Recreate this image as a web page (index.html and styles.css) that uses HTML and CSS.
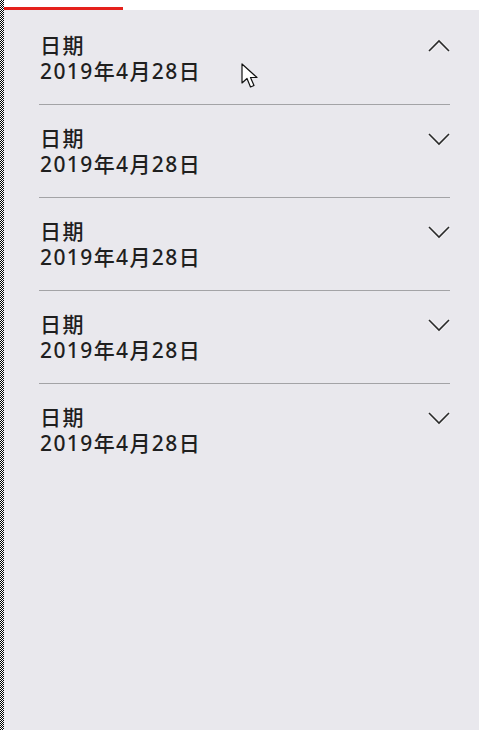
FILE: index.html
```html
<!DOCTYPE html>
<html lang="zh">
<head>
<meta charset="utf-8">
<link rel="stylesheet" href="styles.css">
</head>
<body>
<div class="frame">
  <div class="checker"></div>
  <div class="main">
    <div class="topbar"><div class="progress"></div></div>
    <div class="list">
      <div class="item">
        <div class="texts"><div class="label">日期</div><div class="value">2019年4月28日</div></div>
        <svg class="chev" width="24" height="14" viewBox="0 0 24 14"><polyline points="2,12 12,2 22,12" /></svg>
      </div>
      <div class="item">
        <div class="texts"><div class="label">日期</div><div class="value">2019年4月28日</div></div>
        <svg class="chev" width="24" height="14" viewBox="0 0 24 14"><polyline points="2,2 12,12 22,2" /></svg>
      </div>
      <div class="item">
        <div class="texts"><div class="label">日期</div><div class="value">2019年4月28日</div></div>
        <svg class="chev" width="24" height="14" viewBox="0 0 24 14"><polyline points="2,2 12,12 22,2" /></svg>
      </div>
      <div class="item">
        <div class="texts"><div class="label">日期</div><div class="value">2019年4月28日</div></div>
        <svg class="chev" width="24" height="14" viewBox="0 0 24 14"><polyline points="2,2 12,12 22,2" /></svg>
      </div>
      <div class="item last">
        <div class="texts"><div class="label">日期</div><div class="value">2019年4月28日</div></div>
        <svg class="chev" width="24" height="14" viewBox="0 0 24 14"><polyline points="2,2 12,12 22,2" /></svg>
      </div>
    </div>
  </div>
  <svg class="cursor" width="20" height="28" viewBox="0 0 20 28"><path d="M1,1 L1,20 L6,15.5 L9.5,24 L13,22.5 L9.5,14.5 L16,14.5 Z" fill="#fff" stroke="#111" stroke-width="1.2" stroke-linejoin="round"/></svg>
</div>
</body>
</html>
```
FILE: styles.css
```css
html, body {
  margin: 0;
  padding: 0;
  background: #fff;
}
.frame {
  position: relative;
  display: flex;
  width: 479px;
  height: 730px;
  overflow: hidden;
}
.checker {
  width: 4px;
  flex: none;
  background: repeating-conic-gradient(#000 0 25%, #fff 0 50%) 0 0 / 2px 2px;
}
.main {
  flex: 1;
  display: flex;
  flex-direction: column;
  background: #e9e8ed;
}
.topbar {
  height: 10px;
  background: #fff;
  display: flex;
  align-items: flex-end;
}
.progress {
  width: 119px;
  height: 3px;
  background: #e5211c;
}
.list {
  display: flex;
  flex-direction: column;
  padding: 2px 29px 0 35px;
}
.item {
  height: 92px;
  border-bottom: 1px solid #a3a3a6;
  display: flex;
  justify-content: space-between;
  align-items: flex-start;
  padding: 0 1px;
}
.item.last {
  border-bottom: none;
}
.texts {
  padding-top: 20px;
  font-family: "Noto Sans", "Noto Sans CJK SC", sans-serif;
  font-size: 21px;
  line-height: 26px;
  letter-spacing: 1.4px;
  color: #1f1f1f;
  font-weight: 500;
}
.chev {
  margin-top: 27px;
  margin-right: -2px;
}
.chev polyline {
  fill: none;
  stroke: #2a2a2a;
  stroke-width: 1.6;
  filter: drop-shadow(0 0 0.8px #fff);
}
.cursor {
  position: absolute;
  left: 241px;
  top: 63px;
}
```
